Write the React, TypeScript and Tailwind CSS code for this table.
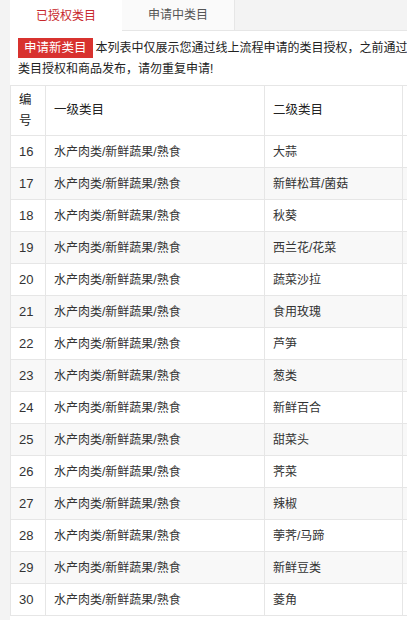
import React from "react";

const subs = [
  "大蒜",
  "新鲜松茸/菌菇",
  "秋葵",
  "西兰花/花菜",
  "蔬菜沙拉",
  "食用玫瑰",
  "芦笋",
  "葱类",
  "新鲜百合",
  "甜菜头",
  "荠菜",
  "辣椒",
  "荸荠/马蹄",
  "新鲜豆类",
  "菱角",
];

export default function App() {
  return (
    <div
      className="w-[407px] h-[620px] overflow-hidden bg-[#f3f3f3] pl-[10px] text-[12px] text-[#333]"
      style={{ fontFamily: '"Liberation Sans", "Noto Sans CJK SC", sans-serif' }}
    >
      {/* tabs */}
      <div className="flex h-[31px] w-[600px]">
        <div className="w-[112px] bg-white flex items-center justify-center text-[#c8282d]">
          已授权类目
        </div>
        <div className="w-[113px] bg-[#fafafa] border-r border-b border-[#e6e6e6] flex items-center justify-center text-[#555]">
          申请中类目
        </div>
        <div className="flex-1 border-b border-[#e6e6e6]" />
      </div>

      <div className="bg-white w-[600px] h-[589px]">
        {/* notice */}
        <div className="w-[560px] px-2 pt-[7px] pb-[5px] leading-[21px] text-[#222]">
          <span className="inline-block bg-[#d8322f] text-white px-[6px] mr-[3px] leading-[20px] text-[12.5px]">
            申请新类目
          </span>
          本列表中仅展示您通过线上流程申请的类目授权，之前通过线下流程申请的
          <br />
          类目授权和商品发布，请勿重复申请!
        </div>

        {/* table */}
        <table className="border-collapse text-left">
          <thead>
            <tr className="h-[50px]">
              <th className="w-[35px] border border-[#e6e6e6] px-2 font-normal text-[#222] leading-[21px] text-[12.5px]">
                编号
              </th>
              <th className="w-[219px] border border-[#e6e6e6] px-2 font-normal text-[#222] text-[12.5px]">
                一级类目
              </th>
              <th className="w-[138px] border border-[#e6e6e6] px-2 font-normal text-[#222] text-[12.5px]">
                二级类目
              </th>
              <th className="w-[150px] border border-[#e6e6e6] px-2" />
            </tr>
          </thead>
          <tbody>
            {subs.map((s, i) => (
              <tr
                key={s}
                className={i % 2 === 1 ? "h-8 bg-[#f8f8f8]" : "h-8 bg-white"}
              >
                <td className="border border-[#e6e6e6] px-2 text-[13px]">{16 + i}</td>
                <td className="border border-[#e6e6e6] px-2">水产肉类/新鲜蔬果/熟食</td>
                <td className="border border-[#e6e6e6] px-2">{s}</td>
                <td className="border border-[#e6e6e6] px-2" />
              </tr>
            ))}
          </tbody>
        </table>
      </div>
    </div>
  );
}
